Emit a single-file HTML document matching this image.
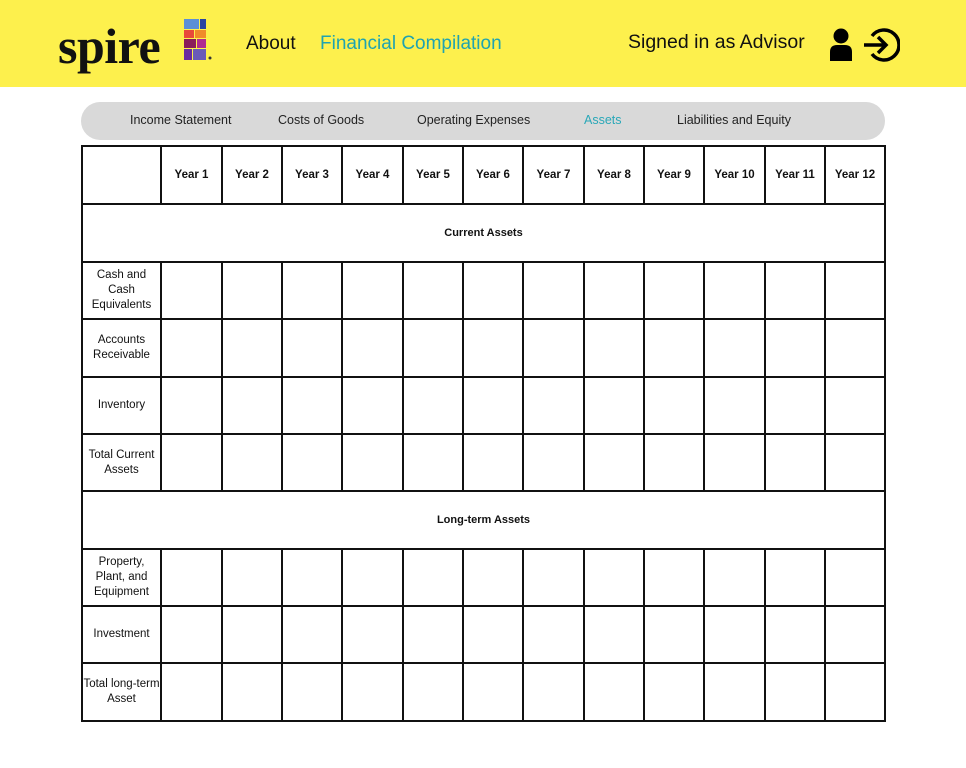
<!DOCTYPE html>
<html><head><meta charset="utf-8"><style>
body{margin:0;width:966px;height:768px;background:#fff;font-family:"Liberation Sans",sans-serif;position:relative;overflow:hidden}
.hdr{position:absolute;left:0;top:0;width:966px;height:87px;background:#fdf04d}
.logo{position:absolute;left:58px;top:17px;font-family:"Liberation Serif",serif;font-weight:bold;font-size:50px;letter-spacing:-0.5px;color:#111}
.nav1{position:absolute;top:33px;font-size:19px;color:#111}
.pill{position:absolute;left:81px;top:102px;width:804px;height:38px;background:#d9d9d9;border-radius:19px}
.pill span{position:absolute;top:11px;font-size:12.5px;color:#222}
table{position:absolute;left:81px;top:145px;border-collapse:collapse;table-layout:fixed;width:803px}
td{border:2px solid #111;text-align:center;font-size:11.5px;padding:0;line-height:15px;color:#111}
th{border:2px solid #111;font-size:11.5px;font-weight:bold;color:#111}
.sec{font-weight:bold;font-size:11px}
</style></head><body>
<div class="hdr">
<div class="logo">spire</div>
<svg style="position:absolute;left:184px;top:19px" width="30" height="42" viewBox="0 0 30 42">
<rect x="0" y="0" width="15" height="10" fill="#5b8fd6"/><rect x="16" y="0" width="6" height="10" fill="#2a44a0"/>
<rect x="0" y="11" width="10" height="8" fill="#e84a3a"/><rect x="11" y="11" width="11" height="8" fill="#f08a2a"/>
<rect x="0" y="20" width="12" height="9" fill="#8a1c5a"/><rect x="13" y="20" width="9" height="9" fill="#b02a90"/>
<rect x="0" y="30" width="8" height="11" fill="#6a2aa0"/><rect x="9" y="30" width="13" height="11" fill="#6a5ab8"/>
<circle cx="26" cy="39" r="1.5" fill="#333"/></svg>
<div class="nav1" style="left:246px">About</div>
<div class="nav1" style="left:320px;color:#1fa3b0">Financial Compilation</div>
<div class="nav1" style="left:628px;top:31px;font-size:19.5px">Signed in as Advisor</div>
<svg style="position:absolute;left:828px;top:28px" width="26" height="34" viewBox="0 0 26 34"><circle cx="13" cy="8" r="7.5" fill="#000"/><path d="M2 33 V24 Q2 17 9 17 H17 Q24 17 24 24 V33 Z" fill="#000"/></svg>
<svg style="position:absolute;left:862px;top:27px" width="38" height="36" viewBox="0 0 38 36"><path d="M10 9 A15 15 0 1 1 10 27" fill="none" stroke="#000" stroke-width="3.5"/><path d="M2 18 H24 M16 10 L24 18 L16 26" fill="none" stroke="#000" stroke-width="3.5"/></svg>
</div>
<div class="pill">
<span style="left:49px">Income Statement</span><span style="left:197px">Costs of Goods</span><span style="left:336px">Operating Expenses</span><span style="left:503px;color:#2aa8b8">Assets</span><span style="left:596px">Liabilities and Equity</span>
</div>
<table>
<colgroup><col style="width:79px"><col style="width:61px"><col style="width:60px"><col style="width:60px"><col style="width:61px"><col style="width:60px"><col style="width:60px"><col style="width:61px"><col style="width:60px"><col style="width:60px"><col style="width:61px"><col style="width:60px"><col style="width:60px"></colgroup>
<tr style="height:58px"><th></th><th>Year 1</th><th>Year 2</th><th>Year 3</th><th>Year 4</th><th>Year 5</th><th>Year 6</th><th>Year 7</th><th>Year 8</th><th>Year 9</th><th>Year 10</th><th>Year 11</th><th>Year 12</th></tr>
<tr style="height:58px"><td colspan="13" class="sec">Current Assets</td></tr>
<tr style="height:57px"><td>Cash and Cash Equivalents</td><td></td><td></td><td></td><td></td><td></td><td></td><td></td><td></td><td></td><td></td><td></td><td></td></tr>
<tr style="height:58px"><td>Accounts Receivable</td><td></td><td></td><td></td><td></td><td></td><td></td><td></td><td></td><td></td><td></td><td></td><td></td></tr>
<tr style="height:57px"><td>Inventory</td><td></td><td></td><td></td><td></td><td></td><td></td><td></td><td></td><td></td><td></td><td></td><td></td></tr>
<tr style="height:57px"><td>Total Current Assets</td><td></td><td></td><td></td><td></td><td></td><td></td><td></td><td></td><td></td><td></td><td></td><td></td></tr>
<tr style="height:58px"><td colspan="13" class="sec">Long-term Assets</td></tr>
<tr style="height:57px"><td>Property, Plant, and Equipment</td><td></td><td></td><td></td><td></td><td></td><td></td><td></td><td></td><td></td><td></td><td></td><td></td></tr>
<tr style="height:57px"><td>Investment</td><td></td><td></td><td></td><td></td><td></td><td></td><td></td><td></td><td></td><td></td><td></td><td></td></tr>
<tr style="height:58px"><td>Total long-term Asset</td><td></td><td></td><td></td><td></td><td></td><td></td><td></td><td></td><td></td><td></td><td></td><td></td></tr>
</table>
</body></html>
